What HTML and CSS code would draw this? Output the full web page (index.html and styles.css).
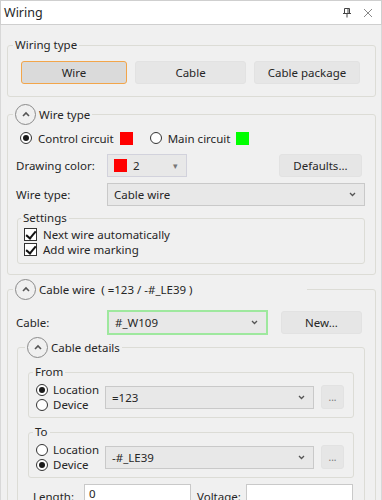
FILE: index.html
```html
<!DOCTYPE html>
<html lang="en">
  <head>
    <meta charset="UTF-8" />
    <title>Wiring</title>
    <link rel="stylesheet" href="styles.css">
  </head>
  <body>
    <div class="window">
      <div class="titlebar">
        <span class="title">Wiring</span>
        <div class="tb-icons">
          <svg width="10" height="11" viewBox="0 0 10 11">
            <path d="M2.5 1.5h5v5h-5z M1 6.5h8 M5 6.5v4" fill="none" stroke="#444" stroke-width="1"/>
            <path d="M6 1.5v5" stroke="#444" stroke-width="1"/>
          </svg>
          <svg width="10" height="10" viewBox="0 0 10 10">
            <path d="M1 1l8 8M9 1l-8 8" stroke="#888" stroke-width="1"/>
          </svg>
        </div>
      </div>

      <div class="panel">
        <fieldset class="group wiring-type">
          <legend>Wiring type</legend>
          <div class="type-buttons">
            <button class="btn selected">Wire</button>
            <button class="btn">Cable</button>
            <button class="btn">Cable package</button>
          </div>
        </fieldset>

        <fieldset class="group wire-type">
          <legend>
            <span class="collapse">
              <svg width="8" height="6" viewBox="0 0 8 6"><path d="M1 5l3-3 3 3" fill="none" stroke="#555" stroke-width="1.6"/></svg>
            </span>
            Wire type
          </legend>
          <div class="radio-row">
            <span class="radio checked"></span>
            <span>Control circuit</span>
            <span class="swatch red"></span>
            <span class="radio"></span>
            <span>Main circuit</span>
            <span class="swatch green"></span>
          </div>
          <div class="row">
            <span class="label">Drawing color:</span>
            <div class="combo color-combo">
              <span class="swatch red"></span>
              <span>2</span>
              <span class="tri">&#9662;</span>
            </div>
            <button class="btn defaults">Defaults...</button>
          </div>
          <div class="row">
            <span class="label">Wire type:</span>
            <div class="combo wide">
              <span>Cable wire</span>
              <svg class="chev" width="7" height="5" viewBox="0 0 7 5"><path d="M1 1l2.5 2.5L6 1" fill="none" stroke="#555" stroke-width="1.3"/></svg>
            </div>
          </div>
          <fieldset class="group settings">
            <legend>Settings</legend>
            <label class="check-row"><span class="checkbox"></span>Next wire automatically</label>
            <label class="check-row"><span class="checkbox"></span>Add wire marking</label>
          </fieldset>
        </fieldset>

        <fieldset class="group cable-wire">
          <legend class="long">
            <span class="collapse">
              <svg width="8" height="6" viewBox="0 0 8 6"><path d="M1 5l3-3 3 3" fill="none" stroke="#555" stroke-width="1.6"/></svg>
            </span>
            Cable wire <span class="ref">( =123 / -#_LE39 )</span>
          </legend>
          <div class="row cable-row">
            <span class="label">Cable:</span>
            <div class="combo cable-combo">
              <span>#_W109</span>
              <svg class="chev" width="7" height="5" viewBox="0 0 7 5"><path d="M1 1l2.5 2.5L6 1" fill="none" stroke="#555" stroke-width="1.3"/></svg>
            </div>
            <button class="btn new">New...</button>
          </div>

          <fieldset class="group details">
            <legend>
              <span class="collapse">
                <svg width="8" height="6" viewBox="0 0 8 6"><path d="M1 5l3-3 3 3" fill="none" stroke="#555" stroke-width="1.6"/></svg>
              </span>
              Cable details
            </legend>

            <fieldset class="group endpoint">
              <legend>From</legend>
              <div class="endpoint-row">
                <div class="choices">
                  <div class="choice"><span class="radio checked"></span>Location</div>
                  <div class="choice"><span class="radio"></span>Device</div>
                </div>
                <div class="combo ep-combo">
                  <span>=123</span>
                  <svg class="chev" width="7" height="5" viewBox="0 0 7 5"><path d="M1 1l2.5 2.5L6 1" fill="none" stroke="#555" stroke-width="1.3"/></svg>
                </div>
                <button class="btn dots">...</button>
              </div>
            </fieldset>

            <fieldset class="group endpoint">
              <legend>To</legend>
              <div class="endpoint-row">
                <div class="choices">
                  <div class="choice"><span class="radio"></span>Location</div>
                  <div class="choice"><span class="radio checked"></span>Device</div>
                </div>
                <div class="combo ep-combo">
                  <span>-#_LE39</span>
                  <svg class="chev" width="7" height="5" viewBox="0 0 7 5"><path d="M1 1l2.5 2.5L6 1" fill="none" stroke="#555" stroke-width="1.3"/></svg>
                </div>
                <button class="btn dots">...</button>
              </div>
            </fieldset>

            <div class="length-row">
              <span class="len-label">Length:</span>
              <div class="input">0</div>
              <span class="volt-label">Voltage:</span>
              <div class="input"></div>
            </div>
          </fieldset>
        </fieldset>
      </div>
    </div>
  </body>
</html>
```

FILE: styles.css
```css
* {
  margin: 0;
  padding: 0;
  box-sizing: border-box;
}

:root {
  --bg: #f0f0f0;
  --line: #dcdcd6;
  --text: #262626;
  --btn: #e6e6e6;
  --field: #e8e8e8;
}

body {
  width: 382px;
  height: 500px;
  overflow: hidden;
  background: var(--bg);
  font-family: "Noto Sans", "Open Sans", sans-serif;
  font-size: 11.5px;
  color: var(--text);
}

.window {
  height: 500px;
  border-left: 1px solid #d8d8d8;
  border-right: 1px solid #d8d8d8;
}

.titlebar {
  height: 25px;
  background: #fff;
  border: 1px solid #cfcfcf;
  margin-left: -1px;
  margin-right: -1px;
  display: flex;
  align-items: center;
  justify-content: space-between;
  padding: 0 8px 0 3px;
}

.title {
  font-size: 12.5px;
}

.tb-icons {
  display: flex;
  align-items: center;
  gap: 11px;
}

.panel {
  padding: 12px 5px 0 6px;
}

/* group boxes */
.group {
  border: 1px solid var(--line);
  border-radius: 3px;
}

.group legend {
  display: flex;
  align-items: center;
  line-height: 16px;
  padding: 0 2px;
  margin-left: -3px;
}

.wiring-type {
  padding: 8px 13px 12px 13px;
}

.wiring-type legend {
  margin-left: -8px;
}

.type-buttons {
  display: grid;
  grid-template-columns: 106px 111px 106px;
  gap: 8px;
}

.btn {
  font: inherit;
  color: var(--text);
  height: 23px;
  background: var(--btn);
  border: 1px solid #e2e2e2;
  border-radius: 3px;
}

.btn.selected {
  background: #dadada;
  border-color: #f2a54a;
}

.wire-type {
  margin-top: 7px;
  padding: 3px 10px 10px 8px;
}

.collapse {
  width: 21px;
  height: 21px;
  border: 1px solid #8a8a8a;
  border-radius: 50%;
  display: inline-flex;
  align-items: center;
  justify-content: center;
  margin-right: 3px;
  background: var(--bg);
}

.collapse svg {
  margin-top: -1px;
}

.radio-row {
  display: flex;
  align-items: center;
  height: 20px;
  padding-left: 4px;
}

.radio {
  width: 12px;
  height: 12px;
  border: 1px solid #333;
  border-radius: 50%;
  background: #fff;
  display: inline-flex;
  align-items: center;
  justify-content: center;
  margin-right: 6px;
  flex: none;
}

.radio.checked::after {
  content: "";
  width: 6px;
  height: 6px;
  border-radius: 50%;
  background: #1a1a1a;
}

.swatch {
  width: 13px;
  height: 13px;
  display: inline-block;
  flex: none;
}

.swatch.red {
  background: #ff0000;
}

.swatch.green {
  background: #00ff00;
}

.radio-row .swatch.red {
  margin: 0 17px 0 6px;
}

.radio-row .swatch.green {
  margin-left: 6px;
}

.row {
  display: flex;
  align-items: center;
  height: 23px;
  margin-top: 6px;
}

.label {
  width: 91px;
  flex: none;
}

.combo {
  height: 23px;
  background: var(--field);
  border: 1px solid #c9c9c9;
  display: flex;
  align-items: center;
  padding: 0 8px 0 6px;
}

.color-combo {
  width: 80px;
  border-color: #d2d2dc;
  gap: 6px;
}

.color-combo .tri {
  margin-left: auto;
  font-size: 9px;
  color: #777;
}

.defaults {
  width: 83px;
  margin-left: auto;
  margin-right: 3px;
}

.wide {
  flex: 1;
  justify-content: space-between;
}

.chev {
  flex: none;
}

.settings {
  margin: 4px 0 0 1px;
  padding: 1px 6px 6px 6px;
}

.check-row {
  display: flex;
  align-items: center;
  height: 15px;
  line-height: 15px;
}

.checkbox {
  width: 13px;
  height: 13px;
  border: 1px solid #333;
  background: #fff;
  margin-right: 6px;
  position: relative;
}

.checkbox::after {
  content: "";
  position: absolute;
  left: 3px;
  top: 0;
  width: 4px;
  height: 8px;
  border: solid #111;
  border-width: 0 2px 2px 0;
  transform: rotate(40deg);
}

.cable-wire {
  margin-top: 4px;
  padding: 10px 10px 10px 8px;
}

.cable-wire legend.long {
  padding-right: 114px;
}

.ref {
  margin-left: 6px;
}

.cable-row {
  height: 25px;
  margin-top: 0;
}

.cable-combo {
  width: 161px;
  height: 25px;
  border: 2px solid #9ee89e;
  justify-content: space-between;
  padding-left: 6px;
}

.new {
  width: 81px;
  margin-left: auto;
  margin-right: 3px;
}

.details {
  margin: 2px 0 0 1px;
  padding: 0 10px 0 10px;
}

.details > legend {
  margin-left: -3px;
}

.endpoint {
  margin-top: 6px;
  padding: 2px 9px 5px 7px;
}

.endpoint-row {
  display: flex;
  align-items: center;
}

.choices {
  width: 69px;
  flex: none;
}

.choice {
  display: flex;
  align-items: center;
  height: 15px;
  line-height: 15px;
}

.choice .radio {
  margin-right: 5px;
}

.ep-combo {
  flex: 1;
  justify-content: space-between;
}

.dots {
  width: 23px;
  height: 24px;
  margin-left: 7px;
  color: #777;
  font-size: 10px;
}

.length-row {
  display: flex;
  align-items: center;
  margin-top: 6px;
  padding-left: 5px;
}

.len-label {
  width: 51px;
}

.volt-label {
  width: 49px;
  margin-left: 6px;
}

.input {
  width: 107px;
  height: 24px;
  background: #fff;
  border: 1px solid #c9c9c9;
  padding: 1px 4px;
}
```
